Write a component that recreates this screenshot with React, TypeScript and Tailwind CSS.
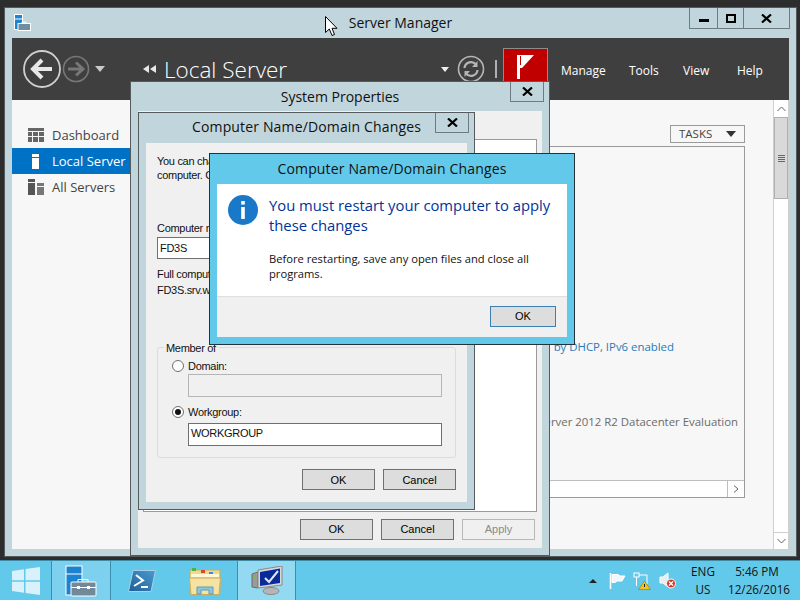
import React from 'react';

const ui = { fontFamily: '"Open Sans", "Noto Sans", sans-serif' };
const dlg = { fontFamily: '"Liberation Sans", Arial, sans-serif' };

const CloseGlyph = () => (
    <svg width="11" height="9" viewBox="0 0 11 9">
        <path d="M1 0.5 L10 8.5 M10 0.5 L1 8.5" stroke="#000" strokeWidth="2.2" />
    </svg>
);

const CloseBox = () => (
    <div className="w-[34px] h-[20px] border border-t-0 border-[#6e7b80] flex items-center justify-center">
        <CloseGlyph />
    </div>
);

const Btn = ({ label, disabled }: { label: string; disabled?: boolean }) => (
    <div
        style={dlg}
        className={
            disabled
                ? 'w-[73px] h-[21px] border border-[#b8b8b8] bg-[#f0f0f0] text-[#8a8a8a] text-[11px] flex items-center justify-center'
                : 'w-[73px] h-[21px] border border-[#707070] bg-[#dddddd] text-black text-[11px] flex items-center justify-center'
        }
    >
        {label}
    </div>
);

const Radio = ({ on }: { on?: boolean }) => (
    <div className="w-[12px] h-[12px] rounded-full border border-[#6f6f6f] bg-white flex items-center justify-center">
        {on && <div className="w-[6px] h-[6px] rounded-full bg-[#111]" />}
    </div>
);

const CursorArrow = () => (
    <svg className="absolute left-[325px] top-[16px]" width="13" height="21" viewBox="0 0 13 21">
        <path d="M0.5 0.5 V16.5 L4.3 13 L7 19.5 L9.5 18.5 L7 12.3 L12 12.3 Z" fill="#fff" stroke="#000" strokeWidth="1" />
    </svg>
);

const ServerIcon = () => (
    <svg width="17" height="17" viewBox="0 0 17 17">
        <rect x="0.5" y="0.5" width="8" height="15" fill="#1c83d1" stroke="#fff" />
        <line x1="1" y1="5" x2="8" y2="5" stroke="#fff" />
        <rect x="4" y="9.5" width="12.5" height="7" fill="#6f8fa0" stroke="#fff" />
        <path d="M8 9.5 V8 H12 V9.5" fill="none" stroke="#fff" />
    </svg>
);

const NavArrows = () => (
    <div className="flex items-center">
        <svg width="40" height="40" viewBox="0 0 40 40">
            <circle cx="20" cy="20" r="18" fill="none" stroke="#cfcfcf" strokeWidth="1.8" />
            <path d="M30 20 H12 M20 11 L11 20 L20 29" fill="none" stroke="#e8e8e8" strokeWidth="4" />
        </svg>
        <svg width="28" height="28" viewBox="0 0 28 28">
            <circle cx="14" cy="14" r="12.5" fill="none" stroke="#777" strokeWidth="1.6" />
            <path d="M6 14 H20 M14 7.5 L21 14 L14 20.5" fill="none" stroke="#777" strokeWidth="3" />
        </svg>
        <div className="ml-[5px] w-0 h-0 border-x-[5px] border-x-transparent border-t-[6px] border-t-[#c9c9c9]" />
    </div>
);

const RefreshIcon = () => (
    <svg width="28" height="28" viewBox="0 0 28 28">
        <circle cx="14" cy="14" r="12.5" fill="none" stroke="#b5b5b5" strokeWidth="1.6" />
        <path d="M7.5 13 A6.5 6.5 0 0 1 19 9.5" fill="none" stroke="#b5b5b5" strokeWidth="2.2" />
        <path d="M20.5 6 V12 H15 Z" fill="#b5b5b5" />
        <path d="M20.5 15 A6.5 6.5 0 0 1 9 18.5" fill="none" stroke="#b5b5b5" strokeWidth="2.2" />
        <path d="M7.5 22 V16 H13 Z" fill="#b5b5b5" />
    </svg>
);

const DashboardIcon = () => (
    <svg width="16" height="14" viewBox="0 0 16 14">
        <rect width="16" height="3" fill="#666" />
        <rect y="4" width="4" height="4" fill="#666" />
        <rect x="5" y="4" width="5" height="4" fill="#666" />
        <rect x="11" y="4" width="5" height="4" fill="#666" />
        <rect y="9" width="4" height="5" fill="#666" />
        <rect x="5" y="9" width="5" height="5" fill="#666" />
        <rect x="11" y="9" width="5" height="5" fill="#666" />
    </svg>
);

const LocalIcon = () => (
    <svg width="16" height="15" viewBox="0 0 16 15">
        <rect x="4" width="7" height="3" fill="#fff" />
        <rect x="4" y="4" width="7" height="11" fill="#fff" />
    </svg>
);

const AllIcon = () => (
    <svg width="16" height="16" viewBox="0 0 16 16">
        <rect width="7" height="3" fill="#555" />
        <rect y="4" width="7" height="12" fill="#555" />
        <rect x="9" y="4" width="7" height="3" fill="#777" />
        <rect x="9" y="8" width="7" height="8" fill="#777" />
    </svg>
);

const SideItem = ({ icon, label, active }: { icon: React.ReactNode; label: string; active?: boolean }) => (
    <div className={active ? 'h-[26px] flex items-center pl-[16px] bg-[#0072c6] text-white' : 'h-[26px] flex items-center pl-[16px] text-[#444]'}>
        <div className="w-[24px] flex items-center">{icon}</div>
        <span style={ui} className="text-[13px] pt-[2px]">{label}</span>
    </div>
);

const ServerManager = () => (
    <div className="absolute left-[4px] top-[7px] w-[793px] h-[550px] border border-[#555a5d] bg-[#c1d5dc] px-[7px] pb-[7px] flex flex-col">
        <div className="h-[30px] grid grid-cols-[1fr_auto_1fr] mx-[-7px]">
            <div className="pl-[9px] pt-[6px]"><ServerIcon /></div>
            <div style={ui} className="text-[14px] text-[#111] pt-[4px]">Server Manager</div>
            <div className="flex justify-end pr-[6px]">
                <div className="h-[21px] flex border border-t-0 border-[#6e7b80]">
                    <div className="w-[28px] border-r border-[#6e7b80] flex items-end justify-center pb-[6px]">
                        <div className="w-[10px] h-[3px] bg-black" />
                    </div>
                    <div className="w-[26px] border-r border-[#6e7b80] flex items-center justify-center">
                        <div className="w-[10px] h-[9px] border-2 border-black" />
                    </div>
                    <div className="w-[45px] flex items-center justify-center"><CloseGlyph /></div>
                </div>
            </div>
        </div>
        <div className="h-[62px] bg-[#3f3f3f] flex items-start">
            <div className="ml-[10px] mt-[11px]"><NavArrows /></div>
            <div className="ml-[38px] mt-[27px] flex gap-[1px]">
                <div className="w-0 h-0 border-y-[4px] border-y-transparent border-r-[6px] border-r-[#e8e8e8]" />
                <div className="w-0 h-0 border-y-[4px] border-y-transparent border-r-[6px] border-r-[#e8e8e8]" />
            </div>
            <div style={ui} className="ml-[8px] mt-[17px] text-[22.5px] leading-[30px] font-light text-white">Local Server</div>
            <div className="ml-auto mt-[29px] w-0 h-0 border-x-[4px] border-x-transparent border-t-[5px] border-t-[#eee]" />
            <div className="ml-[8px] mt-[17px]"><RefreshIcon /></div>
            <div className="ml-[10px] mt-[22px] w-[2px] h-[18px] bg-[#b0b0b0]" />
            <div className="ml-[6px] mt-[10px] w-[45px] h-[36px] bg-[#c00000] border border-[#8c8c8c] flex justify-center pt-[6px] shrink-0">
                <svg width="18" height="24" viewBox="0 0 18 24">
                    <rect x="0" y="0" width="3" height="24" fill="#fff" />
                    <path d="M3 0 H17 L5 13 H3 Z" fill="#fff" />
                    <rect x="3" y="1" width="1" height="9" fill="#c00000" />
                </svg>
            </div>
            <div style={ui} className="flex text-[12px] text-white mt-[24px] pr-[27px]">
                <span className="ml-[13px] w-[68px]">Manage</span>
                <span className="w-[54px]">Tools</span>
                <span className="w-[54px]">View</span>
                <span className="w-[25px]">Help</span>
            </div>
        </div>
        <div className="flex-1 flex bg-[#f7f7f7] min-h-0">
            <div className="w-[136px] pt-[22px] shrink-0">
                <SideItem icon={<DashboardIcon />} label="Dashboard" />
                <SideItem icon={<LocalIcon />} label="Local Server" active />
                <SideItem icon={<AllIcon />} label="All Servers" />
            </div>
            <div className="flex-1 flex flex-col items-end pt-[25px] pr-[28px] pl-[300px]">
                <div style={ui} className="w-[75px] h-[18px] border border-[#9a9a9a] flex items-center pl-[8px] text-[11.5px] text-[#444]">
                    TASKS
                    <div className="ml-[14px] w-0 h-0 border-x-[5px] border-x-transparent border-t-[6px] border-t-[#333]" />
                </div>
                <div className="mt-[3px] w-full h-[352px] border border-[#9a9a9a] flex flex-col">
                    <div style={ui} className="flex-1 flex flex-col items-end pr-[6px] text-[11.4px] pt-[191px]">
                        <span className="pr-[64px] text-[#2a7ab8]">by DHCP, IPv6 enabled</span>
                        <span className="mt-[58px] text-[#6b6b6b]">Server 2012 R2 Datacenter Evaluation</span>
                    </div>
                    <div className="h-[17px] bg-white border-t border-[#bdbdbd] flex justify-end">
                        <div className="w-[17px] border-l border-[#bdbdbd] flex items-center justify-center">
                            <svg width="6" height="8" viewBox="0 0 6 8">
                                <path d="M1 0.5 L5 4 L1 7.5" fill="none" stroke="#606060" />
                            </svg>
                        </div>
                    </div>
                </div>
            </div>
            <div className="w-[16px] bg-white border-x border-[#cfcfcf] flex flex-col shrink-0">
                <div className="h-[17px] flex items-center justify-center">
                    <svg width="9" height="6" viewBox="0 0 9 6"><path d="M0.5 5 L4.5 1 L8.5 5" fill="none" stroke="#606060" /></svg>
                </div>
                <div className="h-[82px] bg-[#d9d9d9] border border-[#b0b0b0] flex flex-col items-center justify-center gap-[1px]">
                    <div className="w-[7px] h-[1px] bg-[#666]" />
                    <div className="w-[7px] h-[1px] bg-[#666]" />
                    <div className="w-[7px] h-[1px] bg-[#666]" />
                    <div className="w-[7px] h-[1px] bg-[#666]" />
                </div>
                <div className="flex-1" />
                <div className="h-[17px] border-t border-[#cfcfcf] flex items-center justify-center">
                    <svg width="9" height="6" viewBox="0 0 9 6"><path d="M0.5 1 L4.5 5 L8.5 1" fill="none" stroke="#606060" /></svg>
                </div>
            </div>
        </div>
    </div>
);

const SystemProperties = () => (
    <div className="absolute left-[130px] top-[81px] w-[420px] h-[475px] border border-[#555a5d] bg-[#c1d5dc] px-[7px] pb-[7px] flex flex-col">
        <div className="h-[29px] flex justify-between mx-[-7px]">
            <div className="w-[40px]" />
            <div style={ui} className="text-[14px] text-[#111] pt-[4px]">System Properties</div>
            <div className="pr-[5px] w-[40px] flex justify-end"><CloseBox /></div>
        </div>
        <div className="flex-1 bg-[#f0f0f0] flex flex-col px-[5px] pt-[28px]">
            <div className="h-[373px] bg-white border border-[#9a9a9a]" />
            <div className="flex justify-end gap-[8px] pt-[7px] pr-[2px]">
                <Btn label="OK" />
                <Btn label="Cancel" />
                <Btn label="Apply" disabled />
            </div>
        </div>
    </div>
);

const NameChanges = () => (
    <div className="absolute left-[138px] top-[112px] w-[337px] h-[398px] border border-[#555a5d] bg-[#c1d5dc] px-[7px] pb-[7px] flex flex-col">
        <div className="h-[30px] flex justify-between mx-[-7px]">
            <div className="w-[40px]" />
            <div style={ui} className="text-[14px] tracking-[0.15px] text-[#111] pt-[3px]">Computer Name/Domain Changes</div>
            <div className="pr-[5px] w-[40px] flex justify-end"><CloseBox /></div>
        </div>
        <div style={dlg} className="flex-1 bg-[#f0f0f0] px-[11px] pt-[11px] text-[11px] tracking-[-0.3px] leading-[14px] text-[#111] flex flex-col">
            <div className="whitespace-nowrap">You can change</div>
            <div className="whitespace-nowrap">computer. Changes</div>
            <div className="mt-[39px]">Computer name:</div>
            <div className="mt-[2px] h-[22px] border border-[#6f6f6f] bg-white pl-[2px] flex items-center">FD3S</div>
            <div className="mt-[8px]">Full computer name:</div>
            <div className="mt-[2px]">FD3S.srv.world</div>
            <div className="relative mt-[50px] w-[299px] h-[111px] border border-[#dcdcdc] rounded-[3px] px-[14px] pt-[11px]">
                <span className="absolute left-[6px] top-[-7px] bg-[#f0f0f0] px-[2px] leading-[14px]">Member of</span>
                <div className="flex items-center gap-[4px]"><Radio />Domain:</div>
                <div className="ml-[16px] mt-[1px] w-[254px] h-[23px] border border-[#b5b5b5] bg-[#f0f0f0]" />
                <div className="flex items-center gap-[4px] mt-[8px]"><Radio on />Workgroup:</div>
                <div className="ml-[16px] mt-[4px] w-[254px] h-[23px] border border-[#6f6f6f] bg-white pl-[2px] pb-[3px] flex items-center">WORKGROUP</div>
            </div>
            <div className="flex justify-end gap-[8px] mt-[11px] w-[299px] tracking-normal">
                <Btn label="OK" />
                <Btn label="Cancel" />
            </div>
        </div>
    </div>
);

const RestartDialog = () => (
    <div className="absolute left-[209px] top-[153px] w-[366px] h-[192px] border border-[#24323a] bg-[#62c9ea] px-[7px] pb-[7px] flex flex-col">
        <div style={ui} className="h-[30px] text-center text-[14px] tracking-[0.15px] text-[#111] pt-[4px]">Computer Name/Domain Changes</div>
        <div className="flex-1 flex flex-col">
            <div className="h-[113px] bg-white border-b border-[#dfdfdf] flex pl-[11px] pt-[11px]">
                <svg className="shrink-0" width="30" height="30" viewBox="0 0 30 30">
                    <circle cx="15" cy="15" r="15" fill="#1a78c9" />
                    <rect x="13.2" y="6" width="3.6" height="3.6" fill="#fff" />
                    <rect x="13.2" y="12" width="3.6" height="12" fill="#fff" />
                </svg>
                <div style={ui} className="ml-[11px]">
                    <div className="text-[14.8px] leading-[20px] text-[#003399] w-[296px]">You must restart your computer to apply these changes</div>
                    <div className="mt-[16px] text-[11.2px] leading-[15px] text-[#111] w-[285px]">Before restarting, save any open files and close all programs.</div>
                </div>
            </div>
            <div className="flex-1 bg-[#f0f0f0] flex justify-end items-start pt-[9px] pr-[11px]">
                <div style={dlg} className="w-[66px] h-[21px] border border-[#3c7fb1] bg-[#dddddd] text-[11px] text-black flex items-center justify-center">OK</div>
            </div>
        </div>
    </div>
);

const WinLogo = () => (
    <svg width="28" height="28" viewBox="0 0 28 28">
        <path d="M0 4 L12 2.3 V13.3 H0 Z M13.5 2 L28 0 V13.3 H13.5 Z M0 14.7 H12 V25.7 L0 24 Z M13.5 14.7 H28 V28 L13.5 26 Z" fill="#d9f1fa" />
    </svg>
);

const TaskServerIcon = () => (
    <svg width="32" height="32" viewBox="0 0 32 32">
        <rect x="1" y="1" width="16" height="29" fill="#1c83d1" stroke="#fff" />
        <line x1="1" y1="9" x2="17" y2="9" stroke="#fff" />
        <rect x="6" y="17" width="25" height="14" rx="1" fill="#73899a" stroke="#fff" />
        <path d="M13 17 V14.5 H23 V17" fill="none" stroke="#fff" />
        <path d="M6 22.5 H31" stroke="#fff" />
        <rect x="12" y="21" width="3" height="3" fill="#fff" />
        <rect x="22" y="21" width="3" height="3" fill="#fff" />
    </svg>
);

const PsIcon = () => (
    <svg width="28" height="22" viewBox="0 0 28 22">
        <defs>
            <linearGradient id="ps" x1="0" y1="1" x2="1" y2="0">
                <stop offset="0" stopColor="#1f5f96" />
                <stop offset="1" stopColor="#4a9bd0" />
            </linearGradient>
        </defs>
        <path d="M5 0.5 H27.5 L23 21.5 H0.5 Z" fill="url(#ps)" stroke="#a9cfe6" />
        <path d="M8 5 L15 10.5 L6 16" fill="none" stroke="#fff" strokeWidth="2" />
        <path d="M13 17 H20" stroke="#fff" strokeWidth="2" />
    </svg>
);

const FolderIcon = () => (
    <svg width="32" height="28" viewBox="0 0 32 28">
        <path d="M1 3 H31 V27 H1 Z" fill="#f1d98b" stroke="#c8ad60" />
        <rect x="3" y="1" width="4" height="3" fill="#4caf50" />
        <rect x="12" y="3" width="4" height="3" fill="#d9472f" />
        <rect x="20" y="5" width="4" height="3" fill="#3d86d8" />
        <rect x="2" y="7" width="28" height="3" fill="#fff7d6" />
        <path d="M0.5 11 H31.5 L30 27.5 H2 Z" fill="#f6e3a1" stroke="#c8ad60" />
        <path d="M8 27 V20 H24 V27 H20 V23 H12 V27 Z" fill="#8cc6e0" stroke="#5d9dbd" />
    </svg>
);

const SysIcon = () => (
    <svg width="32" height="29" viewBox="0 0 32 29">
        <path d="M1 8 L7 6 V22 L1 21 Z" fill="#9b9b9b" stroke="#6b6b6b" />
        <rect x="2" y="9" width="3" height="2" fill="#6fbf3f" />
        <path d="M7 4 L31 0 V19 L7 22 Z" fill="#d8d8d8" stroke="#8a8a8a" />
        <path d="M9 6 L29 2.5 V17 L9 20 Z" fill="#0a2a9a" />
        <path d="M14 12 L18 16 L27 5" fill="none" stroke="#dfe8ff" strokeWidth="2" />
        <ellipse cx="20" cy="25" rx="8" ry="3.5" fill="#b5b5b5" stroke="#8a8a8a" />
    </svg>
);

const TrayIcons = () => (
    <div className="flex items-center">
        <div className="w-0 h-0 border-x-[4px] border-x-transparent border-b-[4px] border-b-[#222]" />
        <svg className="ml-[12px]" width="17" height="16" viewBox="0 0 17 16">
            <path d="M1.5 0 V16" stroke="#fff" strokeWidth="1.5" />
            <path d="M3 1.5 L9 1.5 L11 3 H16 L13 8 H8 L6 9.5 H3 Z" fill="#eef7fb" stroke="#fff" />
        </svg>
        <svg className="ml-[7px]" width="18" height="18" viewBox="0 0 18 18">
            <rect x="1" y="1" width="5" height="4" fill="none" stroke="#fff" />
            <path d="M3.5 5 V14 M6 3 H14 V12" fill="none" stroke="#fff" />
            <path d="M11.5 9 L17.5 17.5 H5.5 Z" fill="#f6c21c" stroke="#8a6a00" strokeWidth="0.5" />
            <rect x="11" y="12" width="1" height="3" fill="#222" />
        </svg>
        <svg className="ml-[8px]" width="17" height="17" viewBox="0 0 17 17">
            <path d="M1 5 H4 L9 1 V15 L4 11 H1 Z" fill="#e6eef2" stroke="#fff" />
            <circle cx="12" cy="11.5" r="4.5" fill="#d9362b" stroke="#fff" />
            <path d="M10 9.5 L14 13.5 M14 9.5 L10 13.5" stroke="#fff" strokeWidth="1.4" />
        </svg>
    </div>
);

const Taskbar = () => (
    <div style={ui} className="h-[40px] bg-[#62c9ea] flex items-stretch border-t border-[#3f8aa5]">
        <div className="w-[52px] border-r border-[#3b8fae] flex items-center justify-center"><WinLogo /></div>
        <div className="w-[59px] border-r border-[#3b8fae] bg-[#7dd1ee] flex items-center justify-center"><TaskServerIcon /></div>
        <div className="w-[63px] flex items-center justify-center pr-[2px]"><PsIcon /></div>
        <div className="w-[63px] flex items-center justify-center pr-[2px]"><FolderIcon /></div>
        <div className="w-[59px] border-x border-[#3b8fae] bg-[#93d9f1] flex items-center justify-center"><SysIcon /></div>
        <div className="ml-auto flex items-center pr-[14px] text-[11.7px] text-[#111]">
            <TrayIcons />
            <div className="ml-[15px] w-[24px] text-center leading-[18px] pb-[1px]">
                <div>ENG</div>
                <div>US</div>
            </div>
            <div className="ml-[13px] w-[58px] text-center leading-[18px] whitespace-nowrap pb-[1px]">
                <div>5:46 PM</div>
                <div>12/26/2016</div>
            </div>
        </div>
    </div>
);

const App: React.FC = () => {
    return (
        <div className="relative w-[800px] h-[600px] overflow-hidden bg-[#2d2d2d] flex flex-col justify-end">
            <ServerManager />
            <SystemProperties />
            <NameChanges />
            <RestartDialog />
            <CursorArrow />
            <Taskbar />
        </div>
    );
};

export default App;
